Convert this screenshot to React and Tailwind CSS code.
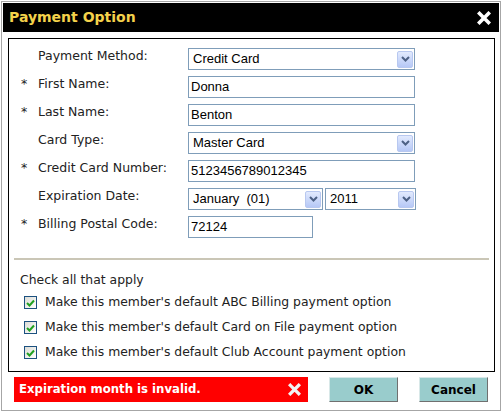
const labelFont = { fontFamily: '"DejaVu Sans", Verdana, sans-serif' };
const inputFont = { fontFamily: '"Liberation Sans", Arial, sans-serif' };

function Arrow() {
  return (
    <div className="w-[16px] h-[17px] rounded-[2px] border border-[#b8c8f0] bg-gradient-to-b from-[#e2eafe] to-[#b6c8f6] flex items-center justify-center">
      <svg width="9" height="6" viewBox="0 0 9 6">
        <path d="M1 1 L4.5 4.5 L8 1" stroke="#4d6185" strokeWidth="2" fill="none" />
      </svg>
    </div>
  );
}

function Select({ value, width }) {
  return (
    <div
      className={`h-[22px] border border-[#7f9db9] bg-white flex items-center justify-between pl-[4px] pr-[1px] ${width}`}
    >
      <span className="text-[13px] text-black whitespace-pre" style={inputFont}>{value}</span>
      <Arrow />
    </div>
  );
}

function TextBox({ value, width }) {
  return (
    <div className={`h-[22px] border border-[#7f9db9] bg-white flex items-center pl-[2px] ${width}`}>
      <span className="text-[13px] text-black" style={inputFont}>{value}</span>
    </div>
  );
}

function Row({ req, label, children }) {
  return (
    <div className="flex items-start h-[28px]">
      <div className="w-[17px] text-[12.5px] leading-[16px] text-[#222]" style={labelFont}>{req ? "*" : ""}</div>
      <div className="w-[150px] text-[12.5px] leading-[16px] text-[#222]" style={labelFont}>{label}</div>
      <div className="flex gap-[2px]">{children}</div>
    </div>
  );
}

function Check({ text }) {
  return (
    <div className="flex items-center gap-[8px] h-[25px]">
      <div className="w-[13px] h-[13px] border border-[#1c5180] bg-gradient-to-br from-[#dcdcd6] to-white flex items-center justify-center">
        <svg width="9" height="8" viewBox="0 0 9 8">
          <path d="M1 4 L3.5 6.5 L8 1.5" stroke="#21a121" strokeWidth="2" fill="none" />
        </svg>
      </div>
      <span className="text-[12.4px] text-[#222]" style={labelFont}>{text}</span>
    </div>
  );
}

function XIcon({ size, color = "white" }) {
  return (
    <svg width={size} height={size} viewBox="0 0 14 14">
      <path d="M2.5 2.5 L11.5 11.5 M11.5 2.5 L2.5 11.5" stroke={color} strokeWidth="3.6" strokeLinecap="square" />
    </svg>
  );
}

export default function App() {
  return (
    <div className="w-[502px] h-[412px] bg-white p-px">
      <div className="h-[410px] border border-[#a6a6a6] p-px flex flex-col">
        <div className="h-[29px] bg-black flex items-center justify-between pl-[6px] pr-[8px]">
          <span className="text-[14px] font-bold text-[#f4d24b]" style={labelFont}>Payment Option</span>
          <XIcon size={14} />
        </div>
        <div className="mt-[6px] ml-[5px] mr-[4px] h-[334px] border border-black bg-white pt-[9px] pl-[12px] pr-[5px]">
          <Row label="Payment Method:">
            <Select value="Credit Card" width="w-[227px]" />
          </Row>
          <Row req label="First Name:">
            <TextBox value="Donna" width="w-[227px]" />
          </Row>
          <Row req label="Last Name:">
            <TextBox value="Benton" width="w-[227px]" />
          </Row>
          <Row label="Card Type:">
            <Select value="Master Card" width="w-[227px]" />
          </Row>
          <Row req label="Credit Card Number:">
            <TextBox value="5123456789012345" width="w-[227px]" />
          </Row>
          <Row label="Expiration Date:">
            <Select value="January  (01)" width="w-[135px]" />
            <Select value="2011" width="w-[91px]" />
          </Row>
          <Row req label="Billing Postal Code:">
            <TextBox value="72124" width="w-[125px]" />
          </Row>
          <div className="mt-[14px] ml-[-7px] h-[2px] bg-[#cac6b6]" />
          <div className="mt-[11px]">
            <div className="ml-[-1px] text-[12.4px] h-[18px] leading-[18px] text-[#222]" style={labelFont}>Check all that apply</div>
            <div className="ml-[3px] mt-[1px]">
              <Check text="Make this member's default ABC Billing payment option" />
              <Check text="Make this member's default Card on File payment option" />
              <Check text="Make this member's default Club Account payment option" />
            </div>
          </div>
        </div>
        <div className="flex items-start mt-[5px] pl-[11px]">
          <div className="w-[294px] h-[25px] bg-[#ff0000] flex items-center justify-between pl-[5px] pr-[7px]">
            <span className="text-[11.7px] font-bold text-white" style={labelFont}>Expiration month is invalid.</span>
            <XIcon size={13} color="#f2f2f2" />
          </div>
          <button
            className="ml-[21px] w-[69px] h-[25px] bg-[#99cccc] border border-t-[#d8e8e8] border-l-[#d8e8e8] border-b-[#707070] border-r-[#707070] text-[12px] font-bold text-black"
            style={labelFont}
          >
            OK
          </button>
          <button
            className="ml-[21px] w-[69px] h-[25px] bg-[#99cccc] border border-t-[#d8e8e8] border-l-[#d8e8e8] border-b-[#707070] border-r-[#707070] text-[12px] font-bold text-black"
            style={labelFont}
          >
            Cancel
          </button>
        </div>
      </div>
    </div>
  );
}
